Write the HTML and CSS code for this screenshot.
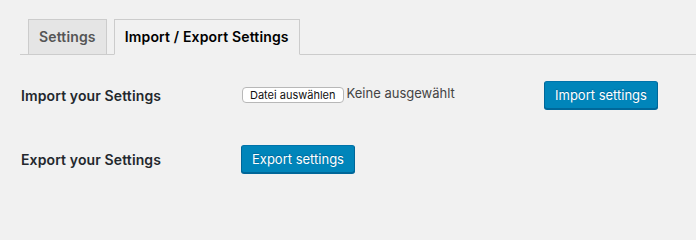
FILE: index.html
```html
<!DOCTYPE html>
<html lang="de">
<head>
<meta charset="utf-8">
<title>Import / Export Settings</title>
<link rel="stylesheet" href="styles.css">
</head>
<body>
<div class="wrap">
  <nav class="tabs">
    <a class="tab" href="#">Settings</a>
    <a class="tab tab-active" href="#">Import / Export Settings</a>
  </nav>
  <div class="rows">
    <div class="row row-import">
      <div class="label">Import your Settings</div>
      <div class="file-field">
        <span class="file-btn">Datei auswählen</span>
        <span class="file-name">Keine ausgewählt</span>
      </div>
      <button class="btn-primary" type="button">Import settings</button>
    </div>
    <div class="row row-export">
      <div class="label">Export your Settings</div>
      <button class="btn-primary" type="button">Export settings</button>
    </div>
  </div>
</div>
</body>
</html>
```
FILE: styles.css
```css
html, body {
  margin: 0;
  padding: 0;
  background: #f1f1f1;
}
body {
  font-family: Inter, "Noto Sans", sans-serif;
  color: #23282d;
  width: 696px;
  height: 233px;
  overflow: hidden;
}
.wrap {
  padding-left: 20px;
}
.tabs {
  display: flex;
  padding-top: 19px;
  border-bottom: 1px solid #ccc;
  height: 35px;
}
.tab {
  display: block;
  margin-left: 8px;
  margin-bottom: -1px;
  padding: 5px 10px;
  height: 24px;
  line-height: 24px;
  font-size: 14px;
  font-weight: 600;
  letter-spacing: 0.15px;
  color: #555;
  background: #e5e5e5;
  border: 1px solid #ccc;
  text-decoration: none;
  white-space: nowrap;
}
.tab-active {
  margin-left: 7px;
  background: #f1f1f1;
  border-bottom-color: #f1f1f1;
  color: #000;
}
.rows {
  padding-top: 26px;
}
.row {
  display: flex;
  align-items: center;
  height: 28px;
}
.row-export {
  margin-top: 36px;
}
.label {
  width: 220px;
  padding-left: 1px;
  font-size: 14px;
  font-weight: 600;
  letter-spacing: 0.12px;
  color: #23282d;
}
.file-field {
  width: 303px;
  display: flex;
  align-items: center;
  margin-top: -1px;
}
.file-btn {
  display: inline-block;
  box-sizing: border-box;
  height: 16px;
  line-height: 14px;
  padding: 0 7px;
  font-size: 11px;
  color: #111;
  background: #fff;
  border: 1px solid #b8b8b8;
  border-radius: 4px;
  margin-left: 1px;
}
.file-name {
  margin-left: 3px;
  font-size: 13px;
  color: #444;
  margin-top: -3px;
}
.btn-primary {
  box-sizing: border-box;
  height: 28px;
  padding: 0 10px;
  font-family: inherit;
  font-size: 13px;
  line-height: 26px;
  color: #fff;
  background: #0085ba;
  border: 1px solid;
  border-color: #0073aa #006799 #006799;
  border-radius: 3px;
  box-shadow: 0 1px 0 #006799;
  text-shadow: 0 -1px 1px #006799;
  cursor: pointer;
}
```
